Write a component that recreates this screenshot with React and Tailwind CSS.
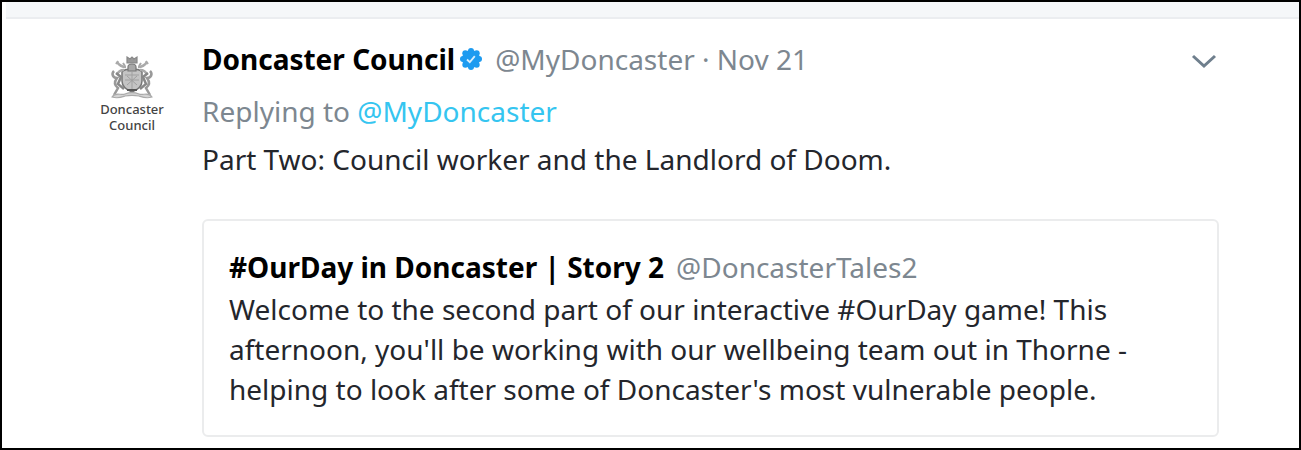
function Crest() {
  return (
    <svg viewBox="0 0 44 46" className="h-[46px] w-[44px]" fill="none" stroke="#777" aria-hidden="true">
      {/* shield and helm */}
      <path d="M12 17c3-4 17-4 20 0v9c0 6-5 9-10 11-5-2-10-5-10-11z" fill="#c4c4c4" strokeWidth="1.5" />
      <path d="M15 20h14M15 25h14M22 17v17M17 30l10-9M17 21l10 9" stroke="#a0a0a0" strokeWidth="1" />
      <path d="M18 12c0-4 8-4 8 0v4h-8z" fill="#a8a8a8" strokeWidth="1.2" />
      <path d="M17 2l3 2 2-2 2 2 3-2v6H17z" fill="#999" stroke="#888" strokeWidth="1.2" />
      <path d="M16 12c-5 0-7-2-9-5M28 12c5 0 7-2 9-5M14 15c-4 0-6 2-7 5M30 15c4 0 6 2 7 5" stroke="#aaa" strokeWidth="2.5" />
      <path d="M8 6l-2 3M36 6l2 3M13 8l2 3M31 8l-2 3" stroke="#aaa" strokeWidth="2" />
      {/* supporters */}
      <path d="M4 16c-3 3-1 7 3 7-3 4-3 7 1 10l-4 7M40 16c3 3 1 7-3 7 3 4 3 7-1 10l4 7" stroke="#999" strokeWidth="2.5" />
      <path d="M6 18l5 4-3 7 6 5M38 18l-5 4 3 7-6 5" stroke="#888" strokeWidth="2.5" />
      {/* motto scroll */}
      <path d="M2 42c4-6 9-1 13-3 5-2 9-2 14 0 4 2 9-3 13 3-6 2-10 0-13-1-5-1-9-1-14 0-3 1-7 3-13 1z" fill="#d4d4d4" stroke="#aaa" strokeWidth="1.2" />
      <path d="M17 35h10" stroke="#555" strokeWidth="2" />
    </svg>
  );
}

function Avatar() {
  return (
    <div className="flex w-16 shrink-0 flex-col items-center pt-3">
      <Crest />
      <p className="text-center font-['Noto_Sans',sans-serif] text-[13px] leading-4 font-medium text-[#444]">
        Doncaster
        <br />
        Council
      </p>
    </div>
  );
}

function VerifiedBadge() {
  return (
    <svg viewBox="0 0 24 24" className="h-6 w-6" role="img" aria-label="Verified account">
      <g fill="#1d9bf0">
        <circle cx="12" cy="12" r="9" />
        <circle cx="12" cy="4" r="3" />
        <circle cx="17.7" cy="6.3" r="3" />
        <circle cx="20" cy="12" r="3" />
        <circle cx="17.7" cy="17.7" r="3" />
        <circle cx="12" cy="20" r="3" />
        <circle cx="6.3" cy="17.7" r="3" />
        <circle cx="4" cy="12" r="3" />
        <circle cx="6.3" cy="6.3" r="3" />
      </g>
      <path d="M8 12.5l2.8 2.7 5-6" fill="none" stroke="#d9effd" strokeWidth="1.8" />
    </svg>
  );
}

function QuotedTweet() {
  return (
    <article className="mt-10 rounded-md border-2 border-[#ebeced] px-[25px] pt-6 pb-[26px]">
      <div className="flex items-baseline gap-3 leading-[44px]">
        <h2 className="font-bold text-black">#OurDay in Doncaster | Story 2</h2>
        <span className="text-[#7d8790]">@DoncasterTales2</span>
      </div>
      <p className="leading-10">
        Welcome to the second part of our interactive #OurDay game! This afternoon, you'll be working with our wellbeing
        team out in Thorne - helping to look after some of Doncaster's most vulnerable people.
      </p>
    </article>
  );
}

export default function App() {
  return (
    <main className="min-h-screen border-2 border-black bg-white font-['Noto_Sans',sans-serif] text-[28px] text-[#24262c]">
      <div className="ml-1 h-[17px] border-b-2 border-[#ebedf0] bg-[#f5f7f9]" />

      <div className="flex gap-[38px] pt-6 pr-20 pl-[98px]">
        <Avatar />

        <div className="min-w-0 flex-1">
          <header className="flex items-center leading-8">
            <h1 className="font-bold text-black">Doncaster Council</h1>
            <span className="ml-1">
              <VerifiedBadge />
            </span>
            <span className="ml-3 text-[#7d8790]">@MyDoncaster · Nov 21</span>
            <button type="button" aria-label="More options" className="ml-auto">
              <svg viewBox="0 0 32 32" className="h-8 w-8" fill="none" stroke="#6f7f8d" strokeWidth="3">
                <path d="M6 13l11 10 11-10" />
              </svg>
            </button>
          </header>

          <p className="mt-3 leading-12 text-[#7d8790]">
            Replying to{" "}
            <a href="#MyDoncaster" className="text-[#35c5f0]">
              @MyDoncaster
            </a>
          </p>
          <p className="mt-1 leading-10">Part Two: Council worker and the Landlord of Doom.</p>

          <QuotedTweet />
        </div>
      </div>
    </main>
  );
}
